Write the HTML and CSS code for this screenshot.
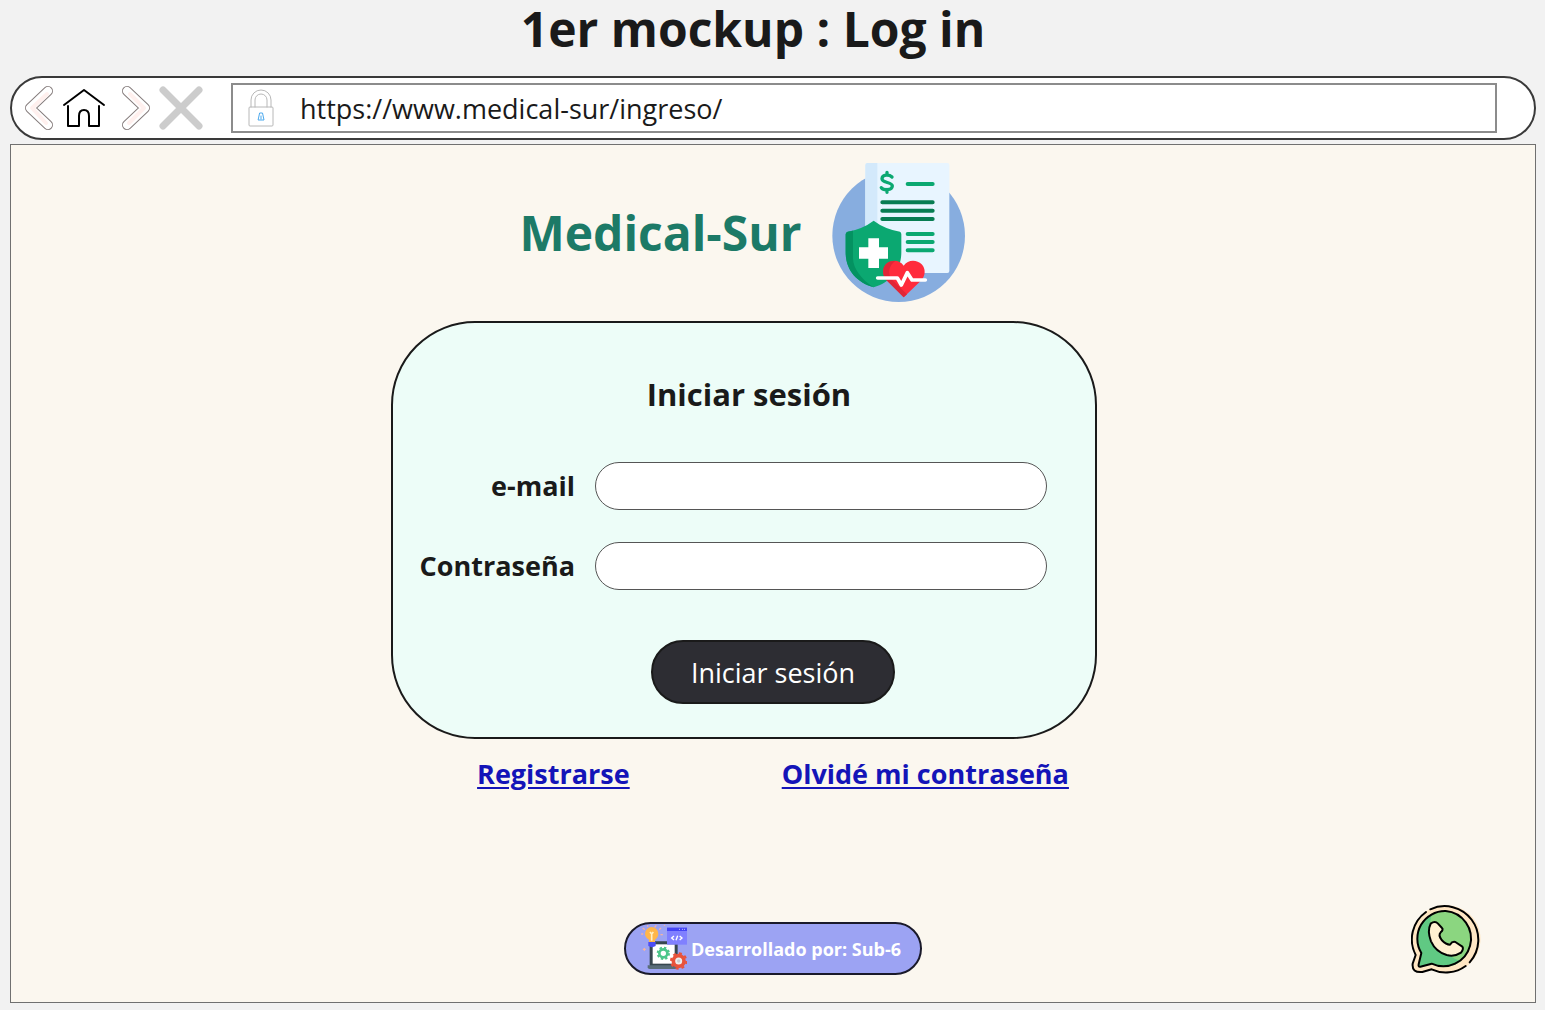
FILE: index.html
```html
<!DOCTYPE html>
<html lang="es">
<head>
<meta charset="utf-8">
<meta name="viewport" content="width=device-width, initial-scale=1">
<title>Medical-Sur</title>
<link rel="stylesheet" href="styles.css">
</head>
<body>
<h1 class="board-title">1er mockup : Log in</h1>

<header class="browser-bar">
  <nav class="browser-nav" aria-label="Navegador">
    <button class="nav-button" type="button" aria-label="Atrás">
      <svg width="30" height="46" viewBox="0 0 30 46"><path class="chevron-edge" d="M24 6L6 23L24 40"/><path class="chevron-fill" d="M24 6L6 23L24 40"/><path class="chevron-tint" d="M23 9L8 23L22 38"/></svg>
    </button>
    <button class="nav-button nav-home" type="button" aria-label="Inicio">
      <svg width="44" height="40" viewBox="0 0 44 40"><path class="home-line" d="M2 17L22 2L42 17M6 18V38H17V28Q17 22 22 22Q27 22 27 28V38H37V18"/></svg>
    </button>
    <button class="nav-button nav-next" type="button" aria-label="Adelante">
      <svg width="30" height="46" viewBox="0 0 30 46"><path class="chevron-edge" d="M6 6L24 23L6 40"/><path class="chevron-fill" d="M6 6L24 23L6 40"/><path class="chevron-tint" d="M9 9L23 23L8 38"/></svg>
    </button>
    <button class="nav-button nav-stop" type="button" aria-label="Detener">
      <svg width="44" height="44" viewBox="0 0 44 44"><path class="stop-line" d="M4 4L40 40M40 4L4 40"/></svg>
    </button>
  </nav>
  <div class="address">
    <svg width="26" height="40" viewBox="0 0 26 40" aria-hidden="true"><path class="lock-arch" d="M3 19V12A10 10 0 0 1 23 12V19M7 19V12A6 6 0 0 1 19 12V19"/><rect class="lock-body" x="1" y="19" width="24" height="19" rx="1"/><path class="lock-key" d="M12 25H14.500L16 32H10.500ZM13 28V31"/></svg>
    <input class="address-input" type="text" aria-label="Dirección" value="https://www.medical-sur/ingreso/">
  </div>
</header>

<main class="screen">
  <section class="login">
    <div class="brand">
      <h2 class="brand-name">Medical-Sur</h2>
      <svg width="133" height="139" viewBox="36 24 399 417" aria-hidden="true">
        <circle cx="236" cy="242" r="199" fill="#87addf"/>
        <rect x="136" y="24" width="252" height="330" rx="6" fill="#e8f5ff"/>
        <path d="M142 24H172V230H136V30Q136 24 142 24Z" fill="#d3e9fb"/>
        <path d="M216 66C208 58 187 57 186 71C185 85 217 80 217 93C216 107 190 106 184 98M201 52V60M201 103V112" fill="none" stroke="#0ba871" stroke-width="10" stroke-linecap="round"/>
        <path d="M263 87H338M263 237H338M263 261H338M263 286H338" stroke="#0ba871" stroke-width="12" stroke-linecap="round"/>
        <path d="M187 142H338M187 167H338M187 192H338" stroke="#087d52" stroke-width="12" stroke-linecap="round"/>
        <path d="M161 197Q194 222 240 230Q244 232 244 238V292C244 345 211 382 161 397C110 382 77 345 77 292V238Q77 232 83 230Q128 222 161 197Z" fill="#0ba871"/>
        <path d="M99 227V310C99 340 124 374 161 397C110 382 77 345 77 292V238Q77 232 83 230Z" fill="#049261"/>
        <path d="M145 250H177V277H204V311H177V339H145V311H117V277H145Z" fill="#fff"/>
        <path d="M251 332C239 313 211 314 198 328C186 342 188 362 199 375L251 427L305 375C316 362 318 342 305 328C291 314 264 313 251 332Z" fill="#ff2b3c"/>
        <path d="M226 318C207 316 193 327 190 342C188 356 191 366 199 375L251 427L261 418L216 374C201 355 207 331 226 318Z" fill="#e02637"/>
        <path d="M173 369H232L244 390L262 353L276 375H316" fill="none" stroke="#fff" stroke-width="11" stroke-linecap="round" stroke-linejoin="round"/>
      </svg>
    </div>

    <form class="card">
      <h3 class="card-title">Iniciar sesión</h3>
      <div class="fields">
        <label class="label" for="email">e-mail</label>
        <input class="field" id="email" type="email">
        <label class="label" for="password">Contraseña</label>
        <input class="field" id="password" type="password">
      </div>
      <button class="submit" type="submit">Iniciar sesión</button>
    </form>
  </section>

  <nav class="links" aria-label="Cuenta">
    <a class="link" href="#registro">Registrarse</a>
    <a class="link" href="#recuperar">Olvidé mi contraseña</a>
  </nav>

  <footer class="footer">
    <div class="credit">
      <svg width="46" height="50" viewBox="72 25 138 150" aria-hidden="true">
        <path d="M74 55H77M78 38L82 41M92 30V32M117 30L114 34M131 38L128 41M132 57H136M142 29H143M79 101H85M82 98V104" stroke="#f5b4a0" stroke-width="4" stroke-linecap="round"/>
        <rect x="98" y="77" width="84" height="75" rx="4" fill="#37474f"/>
        <rect x="107" y="86" width="66" height="58" fill="#fff"/>
        <path d="M92 149H182V155Q182 160 176 160H98Q92 160 92 155Z" fill="#596d78"/>
        <path d="M96 80V72Q84 65 84 54A20 20 0 0 1 124 54Q124 65 114 72V80Z" fill="#ffb64b"/>
        <path d="M104 75V54M99 49L104 55L109 49" fill="none" stroke="#fff0c6" stroke-width="5"/>
        <path d="M94 79H116V91Q105 98 94 91Z" fill="#4c4cf4"/>
        <rect x="150" y="36" width="60" height="51" fill="#8080ff"/>
        <path d="M150 36H210V46H150Z" fill="#4545f5"/>
        <path d="M187 41H189M195 41H197M202 41H204" stroke="#fff" stroke-width="3"/>
        <path d="M171 61L164 67L171 73M188 61L195 67L188 73M182 60L177 74" fill="none" stroke="#fff" stroke-width="4"/>
        <circle cx="139" cy="113" r="12" fill="none" stroke="#4bc68a" stroke-width="8"/>
        <circle cx="139" cy="113" r="17" fill="none" stroke="#4bc68a" stroke-width="6" stroke-dasharray="7 6.35"/>
        <circle cx="185" cy="136" r="16" fill="#eee" stroke="#e8533c" stroke-width="11"/>
        <circle cx="185" cy="136" r="23" fill="none" stroke="#e8533c" stroke-width="6" stroke-dasharray="9 9.06"/>
        <circle cx="185" cy="136" r="5" fill="#c7ccd1"/>
      </svg>
      <span>Desarrollado por: Sub-6</span>
    </div>
  </footer>

  <a class="whatsapp" href="#whatsapp" aria-label="WhatsApp">
    <svg width="70" height="70" viewBox="30 27 210 210" aria-hidden="true">
      <path d="M134 31A101 101 0 1 1 96 224Q76 227 62 232Q34 235 35 208Q38 195 44 180A101 101 0 0 1 134 31Z" fill="#ffe6c3"/>
      <path d="M134 48A83 83 0 1 1 92 206L58 215Q51 216 53 208L61 174A83 83 0 0 1 134 48Z" fill="#8bd680"/>
      <path d="M93 59C72 102 118 181 181 198A83 83 0 0 1 92 206L58 215Q51 216 53 208L61 174A83 83 0 0 1 93 59Z" fill="#60c983"/>
      <path d="M89 86Q102 76 111 86L123 99Q128 104 119 112Q111 120 122 135Q135 149 147 149Q154 138 163 141L184 155Q189 162 180 173Q161 186 137 180Q104 170 90 139Q78 107 89 86Z" fill="#fff0d1"/>
      <g fill="none" stroke="#000" stroke-width="6" stroke-linecap="round" stroke-linejoin="round">
        <path d="M134 48A83 83 0 1 1 92 206L58 215Q51 216 53 208L61 174A83 83 0 0 1 134 48Z"/>
        <path d="M89 86Q102 76 111 86L123 99Q128 104 119 112Q111 120 122 135Q135 149 147 149Q154 138 163 141L184 155Q189 162 180 173Q161 186 137 180Q104 170 90 139Q78 107 89 86Z"/>
        <path d="M88 43A101 101 0 0 1 206 202M194 213A101 101 0 0 1 92 223L64 231Q32 234 35 206L44 180A101 101 0 0 1 75 51"/>
      </g>
    </svg>
  </a>
</main>
</body>
</html>
```
FILE: styles.css
```css
* {
  box-sizing: border-box;
}

body {
  display: flex;
  flex-direction: column;
  min-height: 100vh;
  margin: 0;
  padding: 0 9px 7px 10px;
  background: #f2f2f2;
  color: #1a1a1a;
  font-family: "Open Sans", "Noto Sans", sans-serif;
}

h1,
h2,
h3 {
  margin: 0;
}

button,
input {
  font-family: inherit;
}

.board-title {
  padding-right: 40px;
  font-size: 48px;
  font-weight: 700;
  line-height: 58px;
  text-align: center;
}

.browser-bar {
  display: flex;
  align-items: center;
  height: 64px;
  margin: 18px 0 4px;
  padding: 0 37px 0 12px;
  border: 2px solid #3a3a3a;
  border-radius: 32px;
  background: #fff;
}

.browser-nav {
  display: flex;
  align-items: center;
}

.nav-button {
  display: flex;
  padding: 0;
  border: 0;
  background: none;
}

.nav-home {
  margin-left: 8px;
}

.nav-next {
  margin-left: 15px;
}

.nav-stop {
  margin-left: 8px;
}

.browser-nav path,
.address path {
  fill: none;
  stroke-linecap: round;
  stroke-linejoin: round;
}

.browser-nav .chevron-edge {
  stroke: #857c7c;
  stroke-width: 10;
}

.browser-nav .chevron-fill {
  stroke: #fff;
  stroke-width: 8;
}

.browser-nav .chevron-tint {
  stroke: #fff0ee;
  stroke-width: 4;
}

.home-line {
  stroke: #000;
  stroke-width: 2;
}

.stop-line {
  stroke: #ccc;
  stroke-width: 7;
}

.address {
  display: flex;
  flex: 1;
  align-items: center;
  gap: 26px;
  height: 50px;
  margin-left: 28px;
  padding-left: 15px;
  border: 2px solid #8c8c8c;
}

.lock-arch,
.lock-body {
  fill: none;
  stroke: #b8b8b8;
}

.address .lock-key {
  stroke: #4ba9ee;
}

.address-input {
  flex: 1;
  min-width: 0;
  padding: 0;
  border: 0;
  outline: 0;
  background: none;
  color: #1a1a1a;
  font-size: 27px;
}

.screen {
  position: relative;
  display: flex;
  flex: 1;
  flex-direction: column;
  padding: 18px 24px 27px;
  border: 1px solid #707070;
  background: #fbf7ef;
}

.login {
  display: flex;
  flex-direction: column;
  align-items: center;
  gap: 19px;
  padding-right: 58px;
}

.brand {
  display: flex;
  align-items: center;
  gap: 30px;
  padding-right: 4px;
}

.brand-name {
  color: #1c7a67;
  font-size: 48px;
  font-weight: 700;
  line-height: 56px;
}

.card {
  display: flex;
  flex-direction: column;
  align-items: center;
  width: 100%;
  max-width: 706px;
  padding: 51px 48px 33px 18px;
  border: 2px solid #1a1a1a;
  border-radius: 84px;
  background: #edfdf8;
}

.card-title {
  padding-left: 40px;
  font-size: 31px;
  font-weight: 700;
  line-height: 40px;
}

.fields {
  display: grid;
  grid-template-columns: 1fr minmax(0, 452px);
  align-items: center;
  gap: 32px 20px;
  width: 100%;
  margin-top: 48px;
}

.label {
  font-size: 27px;
  font-weight: 700;
  line-height: 36px;
  text-align: right;
}

.field {
  width: 100%;
  min-width: 0;
  height: 48px;
  padding: 0 24px;
  border: 1px solid #555;
  border-radius: 24px;
  background: #fff;
  font-size: 24px;
}

.submit {
  height: 64px;
  margin: 50px 0 0 88px;
  padding: 0 38px;
  border: 2px solid #1a1a1a;
  border-radius: 32px;
  background: #2d2d33;
  color: #fff;
  font-size: 27px;
}

.links {
  display: flex;
  flex-wrap: wrap;
  justify-content: center;
  gap: 12px 152px;
  margin-top: 17px;
}

.link {
  color: #1414b8;
  font-size: 27px;
  font-weight: 700;
  line-height: 36px;
  text-decoration-thickness: 2px;
  text-underline-offset: 3px;
}

.footer {
  display: flex;
  justify-content: center;
  margin-top: auto;
}

.credit {
  display: flex;
  align-items: center;
  gap: 4px;
  height: 53px;
  padding: 0 19px 0 15px;
  border: 2px solid #1a1a2a;
  border-radius: 27px;
  background: #9ca3f3;
  color: #fff;
  font-size: 18px;
  font-weight: 700;
}

.whatsapp {
  position: absolute;
  right: 54px;
  bottom: 28px;
  display: flex;
}
```
